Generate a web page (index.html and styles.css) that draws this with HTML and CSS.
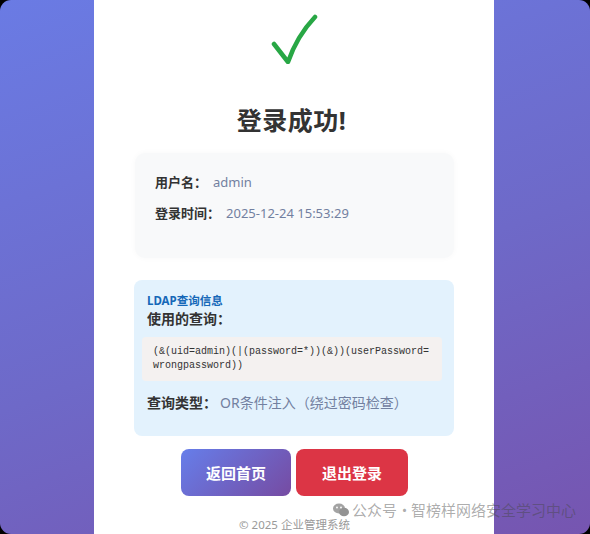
FILE: index.html
```html
<!DOCTYPE html>
<html lang="zh-CN">
<head>
  <meta charset="UTF-8">
  <title>登录成功</title>
  <meta name="viewport" content="width=device-width, initial-scale=1.0">
  <link rel="stylesheet" href="styles.css">
</head>
<body>
  <div class="screen">
    <main class="result-card">
      <svg class="success-icon" width="50" height="50" viewBox="0 0 50 50">
        <path d="M4 30 Q11 39 18 48 Q27 22 45 3" fill="none" stroke="#28a745" stroke-width="4.5" stroke-linecap="round" stroke-linejoin="round"/>
      </svg>
      <h1>登录成功!</h1>

      <div class="user-info">
        <p><strong>用户名：</strong><span>admin</span></p>
        <p><strong>登录时间：</strong><span>2025-12-24 15:53:29</span></p>
      </div>

      <div class="ldap-info">
        <h4>LDAP查询信息</h4>
        <p class="ldap-label">使用的查询：</p>
        <pre class="query">(&amp;(uid=admin)(|(password=*))(&amp;))(userPassword=
wrongpassword))</pre>
        <p class="ldap-type"><strong>查询类型：</strong><span>OR条件注入（绕过密码检查）</span></p>
      </div>

      <div class="actions">
        <button class="btn btn-home">返回首页</button>
        <button class="btn btn-logout">退出登录</button>
      </div>

      <footer>© 2025 企业管理系统</footer>
    </main>

    <div class="mp-mark">
      <svg width="16" height="14" viewBox="0 0 16 14">
        <ellipse cx="6" cy="5.5" rx="6" ry="5" fill="#a3a3a3"/>
        <ellipse cx="11" cy="9" rx="5" ry="4.3" fill="#939393"/>
        <circle cx="4" cy="4.5" r="0.9" fill="#fff"/>
        <circle cx="8" cy="4.5" r="0.9" fill="#fff"/>
      </svg>
      <span>公众号<i class="dot">·</i>智榜样网络安全学习中心</span>
    </div>
  </div>
</body>
</html>
```

FILE: styles.css
```css
html {
  background: #000;
}

body {
  margin: 0;
  font-family: "Noto Sans", "Noto Sans CJK SC", sans-serif;
}

.screen {
  position: relative;
  height: 534px;
  overflow: hidden;
  border-radius: 11px;
  background: linear-gradient(160deg, #6a7be4 0%, #6e69c8 55%, #7655b0 100%);
  display: flex;
  justify-content: center;
}

.result-card {
  width: 400px;
  margin-left: -2px;
  box-sizing: border-box;
  padding: 14px 40px 0 41px;
  background: #fff;
  text-align: center;
}

.success-icon {
  display: block;
  margin: 0 auto;
}

h1 {
  margin: 40px 0 17px;
  padding-right: 6px;
  font-size: 25px;
  line-height: 32px;
  color: #333;
  font-weight: 700;
  letter-spacing: 0.5px;
}

.user-info {
  background: #f8f9fa;
  border-radius: 10px;
  box-shadow: 0 0 6px rgba(0, 0, 0, 0.03);
  padding: 20px 20px 23px;
  text-align: left;
}

.user-info p {
  margin: 0 0 12px;
  font-size: 13px;
  line-height: 19px;
}

strong {
  color: #333;
  font-weight: 700;
  margin-right: 6px;
}

.user-info span,
.ldap-type span {
  color: #7280a0;
}

.ldap-info {
  margin: 22px 0 0 -1px;
  background: #e3f2fd;
  border-radius: 8px;
  padding: 13px 12px 23px 13px;
  text-align: left;
}

.ldap-info h4 {
  margin: 0;
  font-size: 11.5px;
  line-height: 16px;
  color: #1668b8;
}

.ldap-label {
  margin: 0;
  font-size: 14px;
  line-height: 20px;
  font-weight: 700;
  color: #333;
}

.query {
  margin: 8px 0 0 -5px;
  padding: 8px 11px;
  background: #f4f1f0;
  border-radius: 4px;
  font-family: "Liberation Mono", monospace;
  font-size: 10px;
  line-height: 14px;
  color: #333;
  white-space: pre;
}

.ldap-type {
  margin: 12px 0 0;
  font-size: 14px;
  line-height: 20px;
}

.ldap-type strong {
  margin-right: 3px;
}

.actions {
  display: flex;
  justify-content: center;
  gap: 5px;
  margin-top: 13px;
}

.btn {
  border: none;
  border-radius: 8px;
  padding: 14px 25px;
  font-family: "Noto Sans CJK SC", sans-serif;
  font-size: 15px;
  line-height: 19px;
  font-weight: 700;
  color: #fff;
  cursor: pointer;
}

.btn-home {
  background: linear-gradient(135deg, #667eea, #764ba2);
}

.btn-logout {
  padding: 14px 26px;
  background: #dc3545;
}

footer {
  margin-top: 22px;
  font-size: 11.5px;
  line-height: 14px;
  color: #999;
}

/* account watermark in the lower right */
.mp-mark {
  position: absolute;
  left: 333px;
  top: 500px;
  display: flex;
  align-items: center;
  gap: 3px;
  font-family: "Noto Sans CJK SC", sans-serif;
  font-size: 15px;
  line-height: 20px;
  color: rgba(70, 70, 70, 0.45);
}

.mp-mark .dot {
  font-style: normal;
  display: inline-block;
  width: 14px;
  text-align: center;
}
```
